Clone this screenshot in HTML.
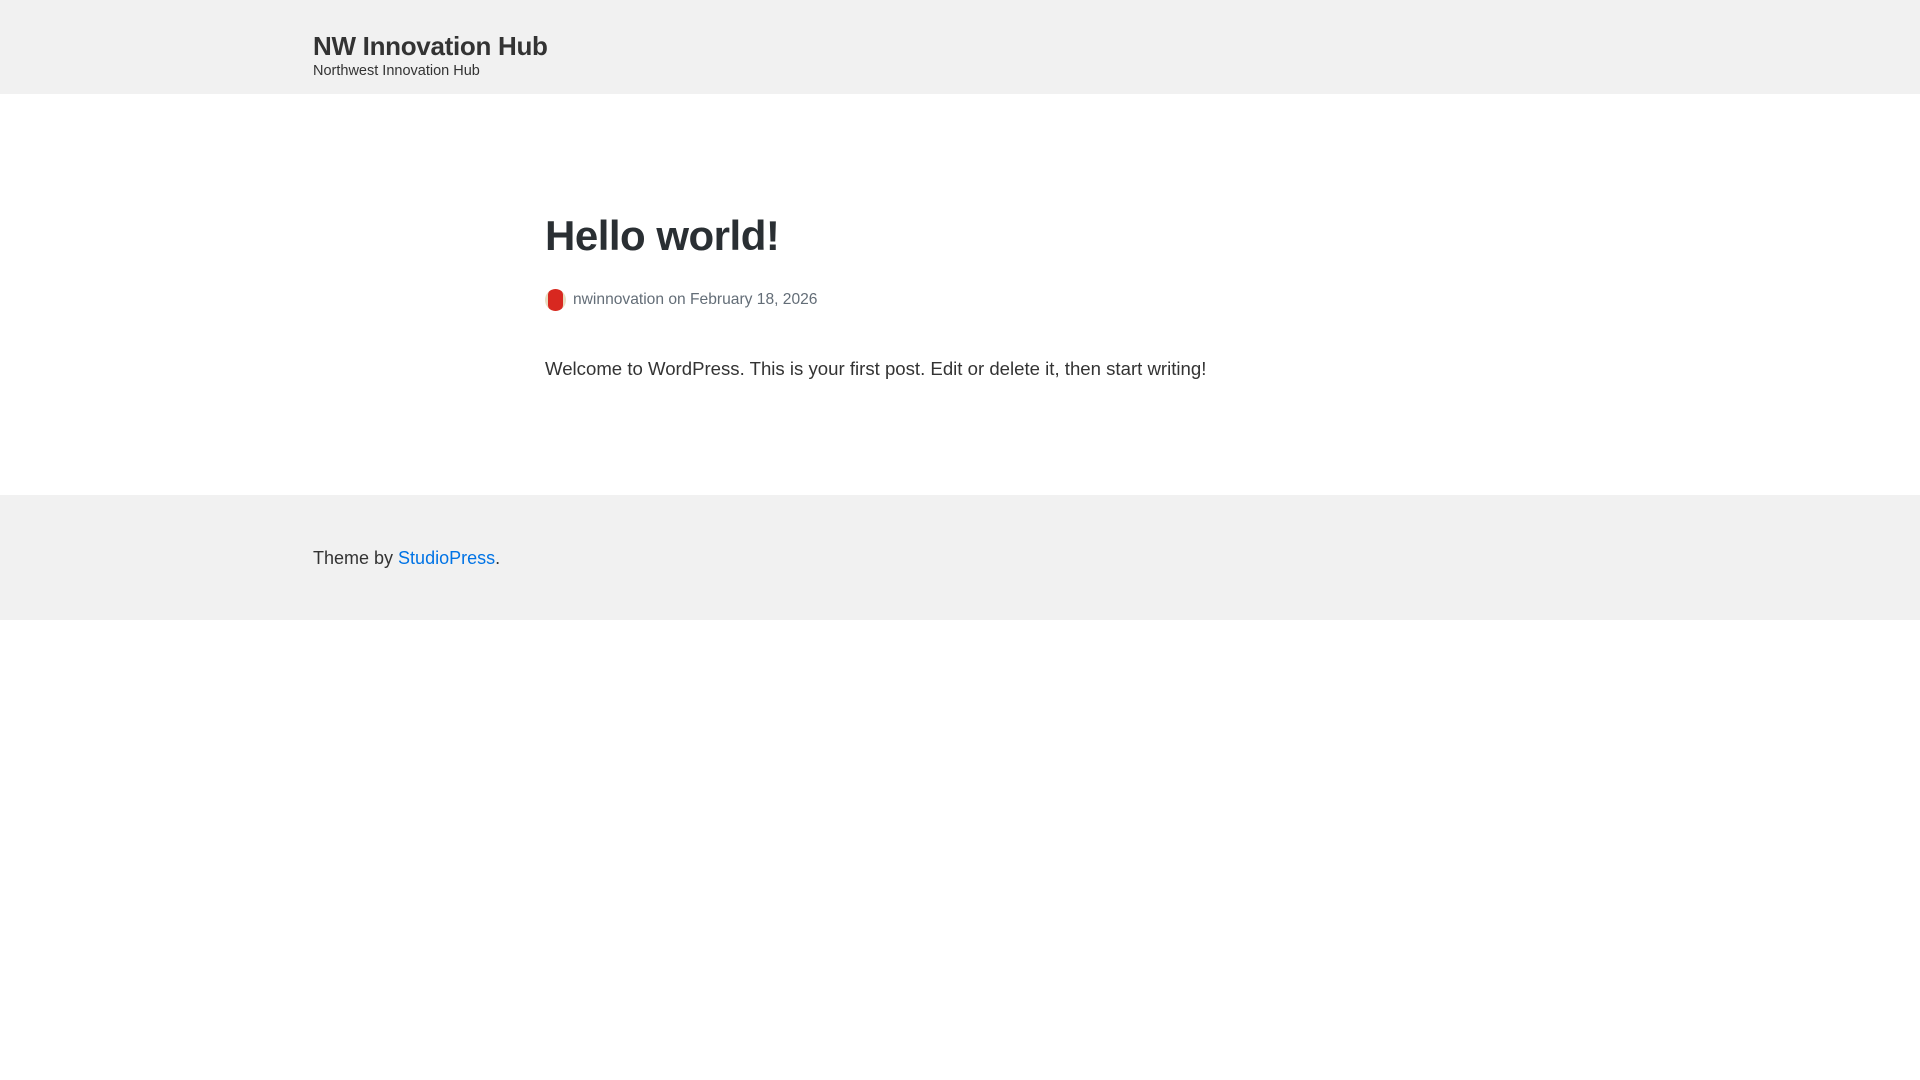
<!DOCTYPE html>
<html><head><meta charset="utf-8"><style>
body{margin:0;width:1920px;height:1080px;background:#fff;font-family:"Liberation Sans",sans-serif;color:#333;position:relative}
.hdr{position:absolute;left:0;top:0;width:1920px;height:94px;background:#f1f1f1}
.t{position:absolute;left:313px;top:31px;font-size:26px;font-weight:600;color:#333;letter-spacing:-0.3px}
.tag{position:absolute;left:313px;top:63px;font-size:14.5px;color:#333}
h1{position:absolute;left:545px;top:212px;margin:0;font-size:42px;font-weight:600;color:#2a2f33;letter-spacing:-0.5px}
.meta{position:absolute;left:545px;top:289px;font-size:15.6px;color:#636d77;display:flex;align-items:center}
.av{width:21px;height:22px;border-radius:50%;background:#e8dcc0;margin-right:7px;position:relative;overflow:hidden}
.av:after{content:"";position:absolute;left:3px;top:0;width:15px;height:22px;background:#d82820;border-radius:6px}
.p{position:absolute;left:545px;top:358px;font-size:18.6px;color:#333}
.ftr{position:absolute;left:0;top:495px;width:1920px;height:125px;background:#f1f1f1}
.ft{position:absolute;left:313px;top:548px;font-size:18px;color:#333}
.ft a{color:#0073e5;text-decoration:none}
</style></head><body>
<div class="hdr"></div>
<div class="t">NW Innovation Hub</div>
<div class="tag">Northwest Innovation Hub</div>
<h1>Hello world!</h1>
<div class="meta"><span class="av"></span>nwinnovation on February 18, 2026</div>
<div class="p">Welcome to WordPress. This is your first post. Edit or delete it, then start writing!</div>
<div class="ftr"></div>
<div class="ft">Theme by <a>StudioPress</a>.</div>
</body></html>
